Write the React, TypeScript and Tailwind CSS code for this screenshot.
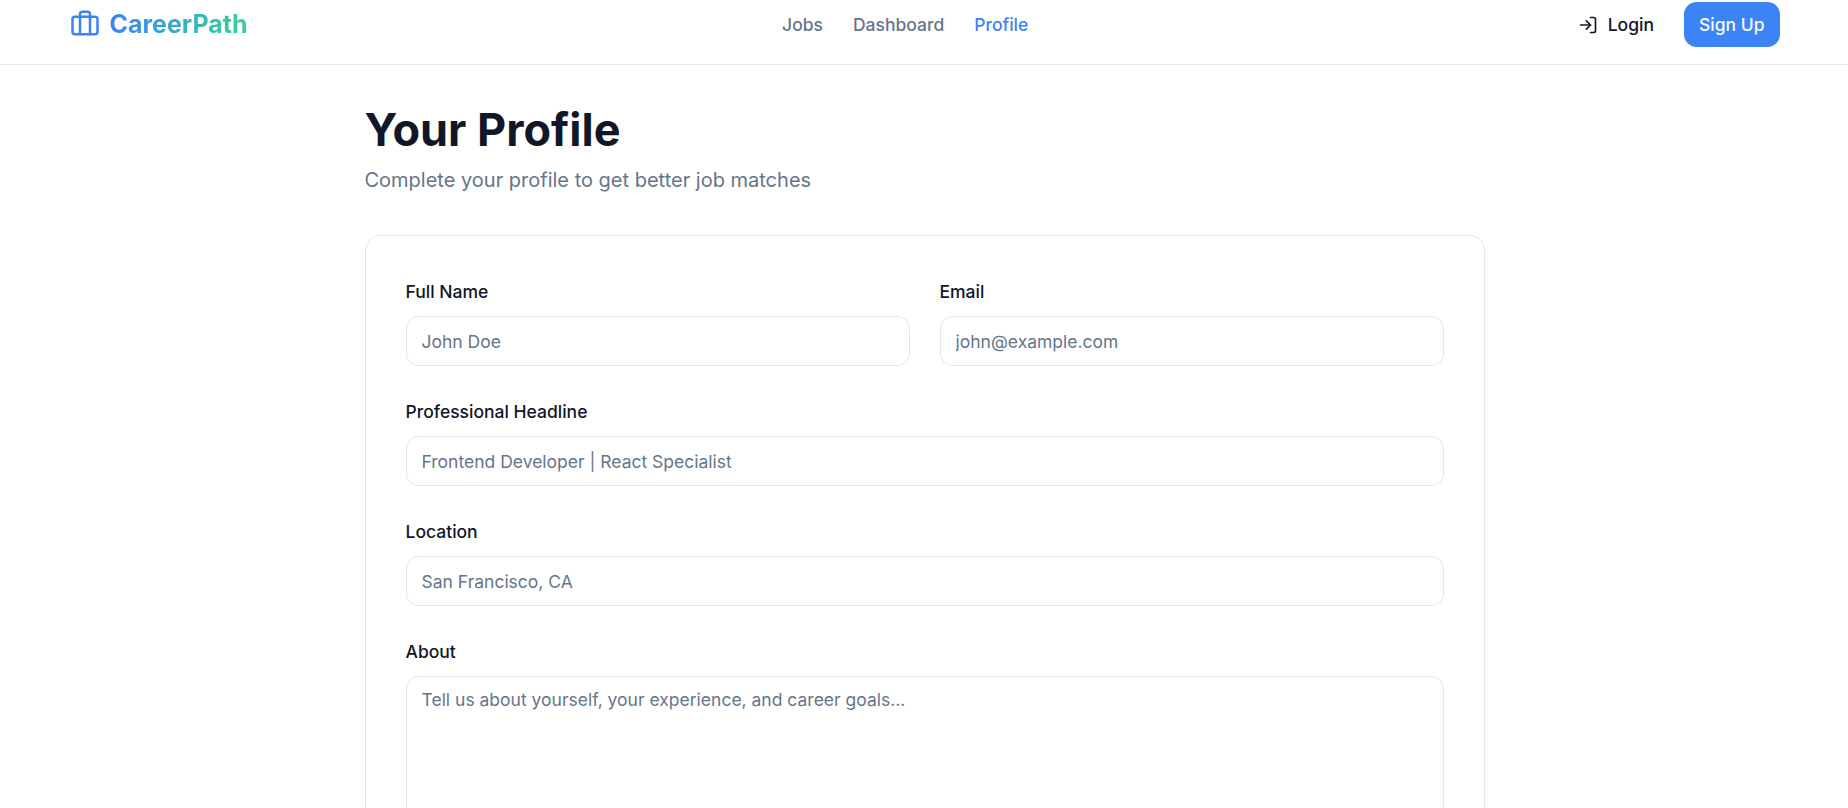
import React from "react";

function BriefcaseIcon() {
  return (
    <svg className="mb-[3px] size-[30px] shrink-0 text-[#3c83f6]" viewBox="0 0 24 24" fill="none" stroke="currentColor" strokeWidth="2" strokeLinecap="round" strokeLinejoin="round">
      <rect width="20" height="14" x="2" y="7" rx="2" ry="2" />
      <path d="M16 21V5a2 2 0 0 0-2-2h-4a2 2 0 0 0-2 2v16" />
    </svg>
  );
}

function LoginIcon() {
  return (
    <svg className="size-5 shrink-0" viewBox="0 0 24 24" fill="none" stroke="currentColor" strokeWidth="2" strokeLinecap="round" strokeLinejoin="round">
      <path d="M15 3h4a2 2 0 0 1 2 2v14a2 2 0 0 1-2 2h-4" />
      <polyline points="10 17 15 12 10 7" />
      <line x1="15" x2="3" y1="12" y2="12" />
    </svg>
  );
}

function Navbar() {
  return (
    <nav className="h-[65px] border-b border-[#e1e7ef] antialiased">
      <div className="mx-auto flex h-[49px] w-[1710px] items-center justify-between">
        <a href="#" className="flex items-center gap-2.5 pb-px">
          <BriefcaseIcon />
          <span className="bg-linear-to-r/srgb from-[#3c83f6] to-[#34d399] bg-clip-text text-[25px] leading-[35px] font-bold text-transparent">CareerPath</span>
        </a>
        <div className="flex items-center gap-[30px] text-[17.5px] leading-[25px] font-medium text-[#65758b]">
          <a href="#">Jobs</a>
          <a href="#">Dashboard</a>
          <a href="#" className="text-[#3c83f6]">Profile</a>
        </div>
        <div className="flex items-center gap-[15px] text-[17.5px] leading-[25px] font-medium">
          <button className="flex h-[45px] items-center gap-2.5 px-[15px]">
            <LoginIcon />
            Login
          </button>
          <button className="-mr-px h-[45px] rounded-[12.5px] bg-[#3c83f6] pr-4 pl-[15px] text-[#f8fafc]">Sign Up</button>
        </div>
      </div>
    </nav>
  );
}

function Field({ label, placeholder, type = "text" }: { label: string; placeholder: string; type?: string }) {
  return (
    <label className="flex flex-col gap-[9px]">
      <span className="pt-px text-[17.5px] leading-[30px] font-medium">{label}</span>
      <input
        type={type}
        placeholder={placeholder}
        className="h-[50px] w-full rounded-[12.5px] border border-[#e1e7ef] px-[15px] text-[17.5px] leading-[25px] outline-none placeholder:text-[#65758b]"
      />
    </label>
  );
}

export default function App() {
  return (
    <div className="h-[808px] overflow-hidden bg-white font-['Inter',sans-serif] text-[#0f1729]">
      <div className="w-[1849px]">
        <Navbar />
        <main className="mx-auto w-[1120px] pt-10">
          <h1 className="text-[45px] leading-[50px] font-bold">Your Profile</h1>
          <p className="mt-2.5 text-[20px] leading-[30px] text-[#65758b]">Complete your profile to get better job matches</p>
          <form className="mt-10 flex flex-col gap-[30px] rounded-[15px] border border-[#e1e7ef] p-10">
            <div className="grid grid-cols-2 gap-[30px]">
              <Field label="Full Name" placeholder="John Doe" />
              <Field label="Email" placeholder="john@example.com" type="email" />
            </div>
            <Field label="Professional Headline" placeholder="Frontend Developer | React Specialist" />
            <Field label="Location" placeholder="San Francisco, CA" />
            <label className="flex flex-col gap-[9px]">
              <span className="pt-px text-[17.5px] leading-[30px] font-medium">About</span>
              <textarea
                placeholder="Tell us about yourself, your experience, and career goals..."
                className="h-[190px] w-full resize-none rounded-[12.5px] border border-[#e1e7ef] px-[15px] py-2.5 text-[17.5px] leading-[25px] outline-none placeholder:text-[#65758b]"
              />
            </label>
          </form>
        </main>
      </div>
    </div>
  );
}
